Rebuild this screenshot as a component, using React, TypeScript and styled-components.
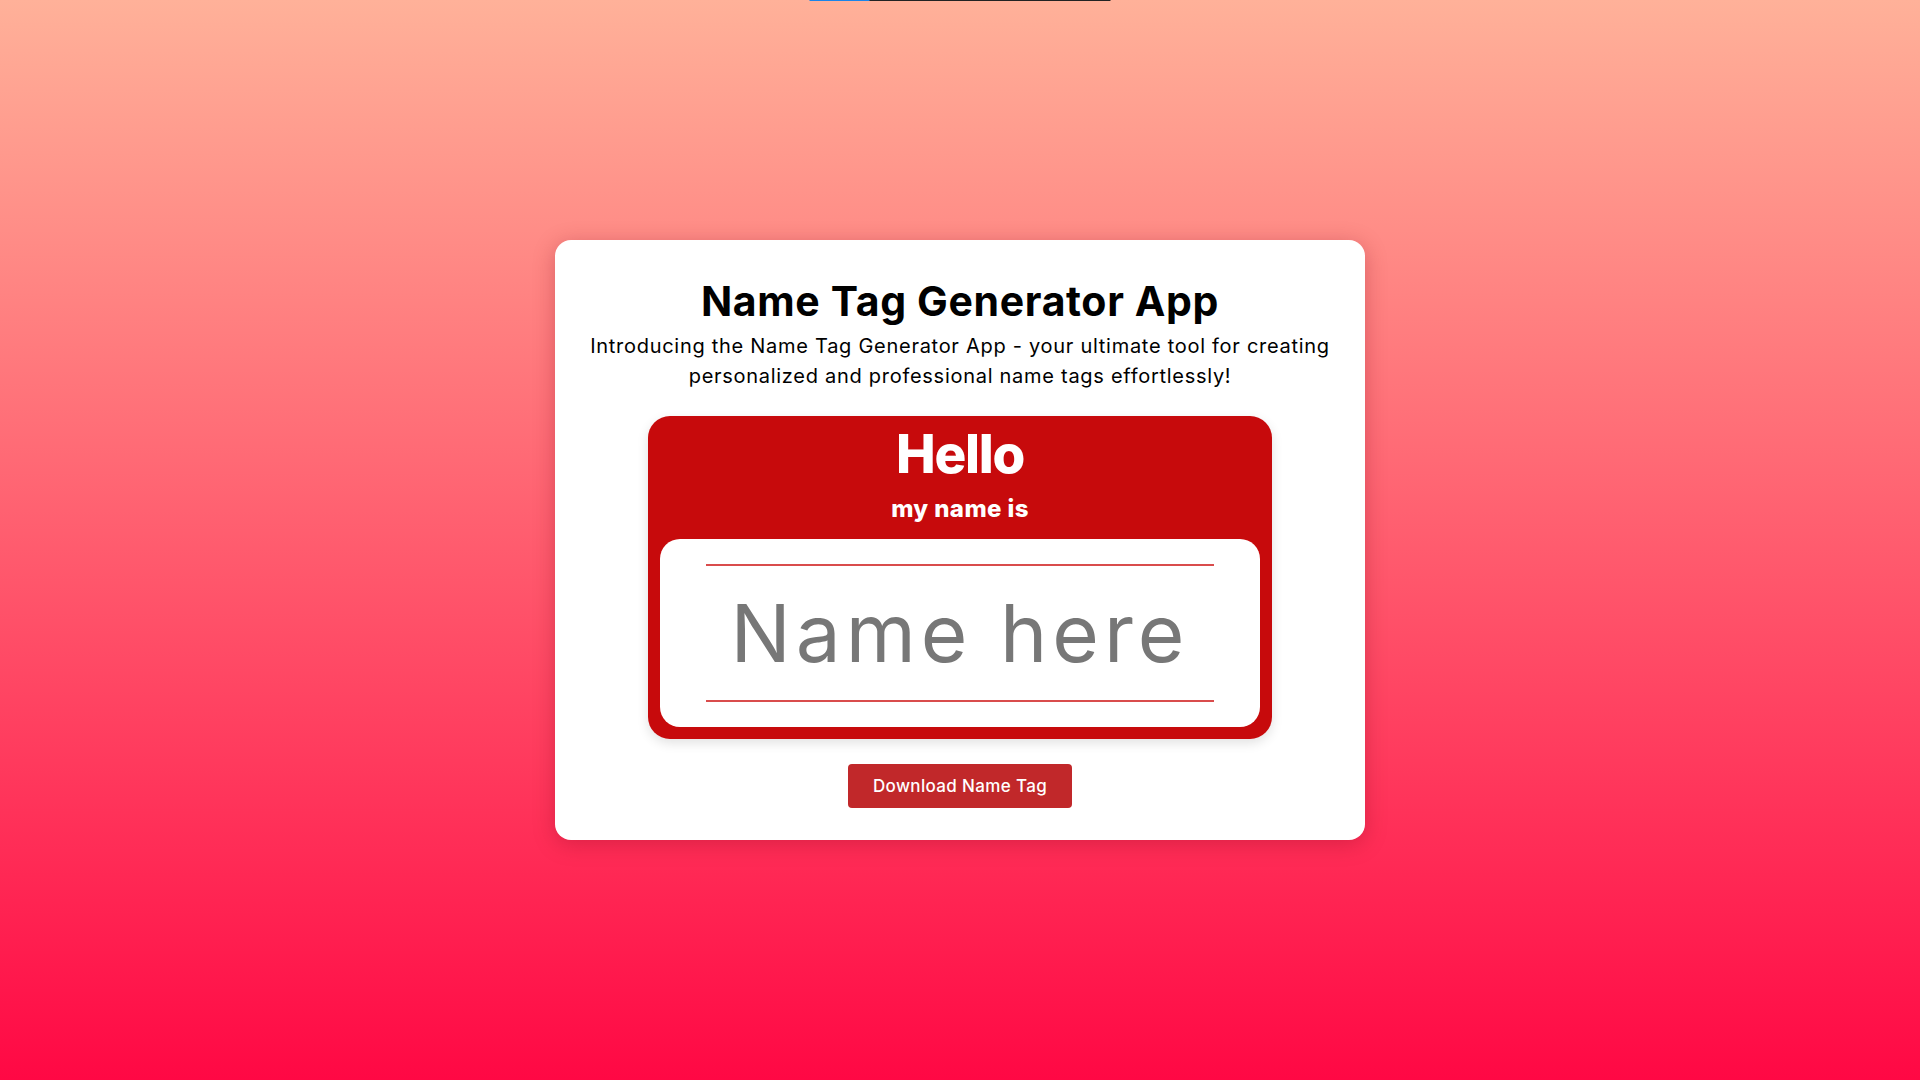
import React from "react";
import styled, { createGlobalStyle } from "styled-components";

const GlobalStyle = createGlobalStyle`
  * { box-sizing: border-box; }
  html, body { margin: 0; padding: 0; }
  body {
    font-family: Inter, "Noto Sans", sans-serif;
    background: linear-gradient(to top, #ff0844 0%, #ffb199 100%);
    min-height: 100vh;
  }
`;

const Page = styled.main`
  min-height: 100vh;
  display: flex;
  align-items: center;
  justify-content: center;
`;

const TopProgress = styled.div`
  position: fixed;
  top: 0;
  left: 50%;
  transform: translateX(-50%);
  width: 301px;
  height: 1px;
  background: #222222;
  display: flex;
`;

const TopProgressFill = styled.div<{ $pct: number }>`
  width: ${(p) => p.$pct}%;
  height: 100%;
  background: #1a84e8;
`;

const Card = styled.section`
  width: 810px;
  background: #ffffff;
  border-radius: 16px;
  box-shadow: 0 4px 22px rgba(120, 0, 20, 0.28);
  padding: 37px 32px 32px;
  display: flex;
  flex-direction: column;
  align-items: center;
  text-align: center;
`;

const Title = styled.h1`
  margin: 0;
  font-size: 41px;
  line-height: 48px;
  font-weight: 700;
  letter-spacing: 0.65px;
  color: #000000;
`;

const Subtitle = styled.p`
  margin: 6px 0 0;
  max-width: 746px;
  font-size: 20px;
  line-height: 30px;
  font-weight: 400;
  letter-spacing: 0.72px;
  color: #000000;
`;

const Tag = styled.div`
  margin-top: 25px;
  width: 624px;
  background: #c70a0c;
  border-radius: 22px;
  padding: 10px 12px 12px;
  display: flex;
  flex-direction: column;
  align-items: center;
  box-shadow: 0 4px 12px rgba(0, 0, 0, 0.12);
`;

const Hello = styled.div`
  font-size: 53px;
  line-height: 56px;
  font-weight: 800;
  letter-spacing: -1.3px;
  color: #ffffff;
`;

const MyName = styled.div`
  margin-top: 12px;
  font-size: 24px;
  line-height: 30px;
  font-weight: 800;
  letter-spacing: 0.4px;
  color: #ffffff;
`;

const NameBox = styled.div`
  margin-top: 15px;
  width: 100%;
  background: #ffffff;
  border-radius: 20px;
  padding: 25px 46px;
`;

const NameLine = styled.div`
  border-top: 2px solid #d94c4c;
  border-bottom: 2px solid #d94c4c;
  height: 138px;
  display: flex;
  align-items: center;
  justify-content: center;
`;

const NameText = styled.span`
  font-size: 80px;
  line-height: 1;
  font-weight: 400;
  letter-spacing: 5px;
  color: #777777;
`;

const DownloadButton = styled.button`
  margin-top: 25px;
  height: 44px;
  padding: 0 25px;
  border: none;
  border-radius: 4px;
  background: #c1282a;
  color: #ffffff;
  font-family: Inter, "Noto Sans", sans-serif;
  font-size: 17px;
  font-weight: 500;
  letter-spacing: 0.35px;
  cursor: pointer;
`;

export default function App() {
  return (
    <>
      <GlobalStyle />
      <TopProgress>
        <TopProgressFill $pct={20} />
      </TopProgress>
      <Page>
        <Card>
          <Title>Name Tag Generator App</Title>
          <Subtitle>
            Introducing the Name Tag Generator App - your ultimate tool for creating
            personalized and professional name tags effortlessly!
          </Subtitle>
          <Tag>
            <Hello>Hello</Hello>
            <MyName>my name is</MyName>
            <NameBox>
              <NameLine>
                <NameText>Name here</NameText>
              </NameLine>
            </NameBox>
          </Tag>
          <DownloadButton>Download Name Tag</DownloadButton>
        </Card>
      </Page>
    </>
  );
}
